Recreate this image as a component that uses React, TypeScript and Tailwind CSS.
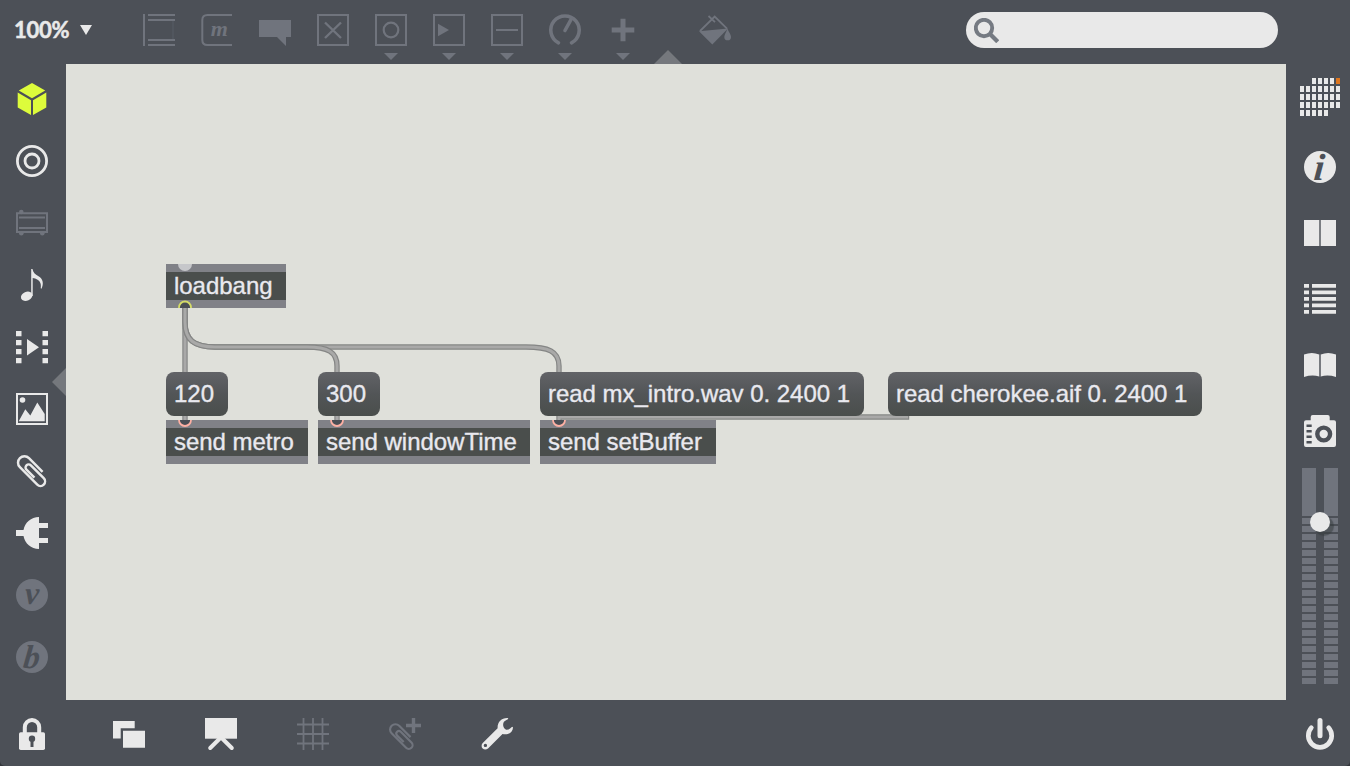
import React from "react";

type IconProps = { children: React.ReactNode; tone?: "light" | "muted" | "lime"; className?: string };

const tones = {
  light: "text-[#e9e9e9]",
  muted: "text-[#70747d]",
  lime: "text-[#ddfc3b]",
};

function Icon({ children, tone = "light", className = "" }: IconProps) {
  return (
    <svg viewBox="0 0 32 32" fill="currentColor" className={`block size-8 shrink-0 overflow-visible ${tones[tone]} ${className}`}>
      {children}
    </svg>
  );
}

function Line({ d, w = 2, cap = "butt" }: { d: string; w?: number; cap?: "butt" | "round" }) {
  return <path d={d} fill="none" stroke="currentColor" strokeWidth={w} strokeLinecap={cap} />;
}

function Glyph({ children, size, x, y, slant = 0, fill = "#4c5057" }: { children: string; size: number; x: number; y: number; slant?: number; fill?: string }) {
  return (
    <text
      transform={`translate(${x} ${y}) skewX(${-slant})`}
      fontSize={size}
      textAnchor="middle"
      fill={fill}
      className="font-['Liberation_Serif',serif] font-bold italic"
    >
      {children}
    </text>
  );
}

const clipPath = "M7.5-6.5H-10.5A6 6 0 0 0-10.5 5.5H12.5A4.25 4.25 0 0 0 12.5-3H-4.5A2.9 2.9 0 0 0-4.5 2.8H6";
const frame = "M1 1H31V31H1Z";

function Tool({ children, menu = false }: { children: React.ReactNode; menu?: boolean }) {
  return (
    <div className="flex flex-col items-center gap-[7px]">
      <Icon tone="muted">{children}</Icon>
      {menu && (
        <svg viewBox="0 0 14 7" className="block h-[7px] w-3.5">
          <path d="M0 0H14L7 7Z" fill="#70747d" />
        </svg>
      )}
    </div>
  );
}

function TopBar() {
  return (
    <header className="relative flex h-16 items-start">
      <div className="flex w-[143px] items-center gap-[11px] pt-[14px] pl-3.5">
        <span className="w-[55px] font-['Lato',sans-serif] text-[22px] leading-8 font-bold tracking-[-0.3px] whitespace-nowrap text-[#e9e9e9] [-webkit-text-stroke:0.5px_#e9e9e9]">100%</span>
        <svg viewBox="0 0 12 10" className="block h-2.5 w-3">
          <path d="M0 0H12L6 10Z" fill="#e9e9e9" />
        </svg>
      </div>
      <div className="flex gap-[26px] pt-3.5">
        <Tool>
          <path d="M0 0H2V32H0ZM5 0H32V2H5ZM5 5H32V7H5ZM5 25H32V27H5ZM5 30H32V32H5Z" />
          <path d="M29.5 7H30.5V25H29.5Z" opacity=".35" />
        </Tool>
        <Tool>
          <Line d="M31 1H6.5Q1.3 1 1.3 6V26Q1.3 31 6.5 31H31" />
          <Glyph size={22} x={18.3} y={21.7} fill="#70747d">m</Glyph>
        </Tool>
        <Tool>
          <path d="M0 6H32V23H27V32L18 23H0Z" />
        </Tool>
        <Tool>
          <Line d={frame} />
          <Line d="M8 8.5L24 24M24 8.5L8 24" w={2.4} />
        </Tool>
        <Tool menu>
          <Line d={frame} />
          <circle cx="16" cy="16" r="7.3" fill="none" stroke="currentColor" strokeWidth="2.2" />
        </Tool>
        <Tool menu>
          <Line d={frame} />
          <path d="M5 9.7L16 16L5 22.3Z" />
        </Tool>
        <Tool menu>
          <Line d={frame} />
          <Line d="M5 16H27" />
        </Tool>
        <Tool menu>
          <Line d="M9.5 28.8A14.2 14.2 0 1 1 22.5 28.8" w={3.6} cap="round" />
          <Line d="M16 16.5L22.3 5" w={3.6} cap="round" />
        </Tool>
        <Tool menu>
          <Line d="M4.7 16H27.3M16 4.8V27.3" w={5} />
        </Tool>
      </div>
      <div className="ml-[60px] pt-3.5">
        <Icon tone="muted">
          <path d="M0 17.3L29 14.5L13.3 30.5Z" />
          <Line d="M1 17L15.7 2.6L28 14.6M9.5 2L16 8.2" w={1.8} />
          <path d="M28.3 14.5C30 18.5 32 20.5 32 23A3.3 3.3 0 0 1 25.3 23C25.3 20.5 27.3 18.5 28.3 14.5Z" />
        </Icon>
      </div>
      <svg viewBox="0 0 28 14" className="absolute top-[50px] left-[654px] h-3.5 w-7">
        <path d="M0 14L14 0L28 14Z" fill="#75787d" />
      </svg>
      <label className="mt-3 mr-[72px] ml-auto flex h-9 w-[312px] items-center rounded-full bg-[#e9e9e9] pl-2">
        <svg viewBox="0 0 25 25" className="block size-[25px]" fill="none" stroke="#757a82">
          <circle cx="10" cy="10" r="8.2" strokeWidth="3.9" />
          <path d="M15.5 15.5L23.7 23.7" strokeWidth="4.2" />
        </svg>
      </label>
    </header>
  );
}

function LeftBar() {
  return (
    <nav className="relative flex w-[66px] flex-col gap-[30px] pt-[19px] pl-4">
      <Icon tone="lime">
        <path d="M16 0L29.2 7.6L16 15.2L2.8 7.6ZM1.7 9.5L15 17.2V32L1.7 24.4ZM30.3 9.5L17 17.2V32L30.3 24.4Z" />
      </Icon>
      <Icon>
        <g fill="none" stroke="currentColor" strokeWidth="2.8">
          <circle cx="16" cy="16" r="14.6" />
          <circle cx="16" cy="16" r="7" />
        </g>
      </Icon>
      <Icon tone="muted">
        <Line d="M1 6.3H31V25H1ZM3 10.5H29M3 21H29" />
        <circle cx="5.3" cy="5" r="2.3" />
        <circle cx="5.3" cy="26.3" r="2.3" />
        <circle cx="26.3" cy="26.3" r="2.3" />
      </Icon>
      <Icon>
        <path d="M15.2 0H16.5C17 3.5 19 5.2 22.5 7.2C27 9.9 28 14.5 25.5 19.7L24.7 19.3C25.6 14.5 24 10.3 16.7 9V27H15.2Z" />
        <ellipse cx="10.7" cy="27.2" rx="6" ry="4.4" transform="rotate(-24 10.7 27.2)" />
      </Icon>
      <Icon>
        {[0, 9, 18, 27].map((y) => (
          <path key={y} d={`M0 ${y}H5.5V${y + 5.2}H0ZM26.5 ${y}H32V${y + 5.2}H26.5Z`} />
        ))}
        <path d="M11 8L23 16.2L11 24.4Z" />
      </Icon>
      <Icon>
        <Line d={frame} />
        <circle cx="6.5" cy="7" r="2.8" />
        <path d="M2.7 28.3L9.3 16.3L14.3 22.5L21.3 9.5L28.7 21V28.3Z" />
      </Icon>
      <Icon>
        <g transform="translate(16 16) rotate(45) scale(1.07)">
          <Line d={clipPath} w={2.3} />
        </g>
      </Icon>
      <Icon>
        <path d="M0 13H7.5C9 5.5 15 0 23 0V6H32V11H23V21H32V26H23V32C15 32 9 26.5 7.5 19H0Z" />
      </Icon>
      <Icon tone="muted">
        <circle cx="16" cy="16" r="16" />
        <Glyph size={32} x={15.5} y={24.8} slant={3}>v</Glyph>
      </Icon>
      <Icon tone="muted">
        <circle cx="16" cy="16" r="16" />
        <Glyph size={33} x={14.8} y={26.7} slant={6}>b</Glyph>
      </Icon>
      <svg viewBox="0 0 14 28" className="absolute top-[304px] right-0 h-7 w-3.5">
        <path d="M14 0V28L0 14Z" fill="#75787d" />
      </svg>
    </nav>
  );
}

const logoRows = [
  [2, 3, 4, 5, 6],
  [0, 1, 2, 3, 4, 5, 6],
  [0, 1, 2, 3, 4, 5, 6],
  [0, 1, 2, 3, 4, 5, 6],
  [0, 1, 2, 3, 4],
];

function Meter() {
  return (
    <div className="flex w-3.5 flex-col gap-0.5">
      <div className="h-12 bg-[#70747d]" />
      {Array.from({ length: 21 }, (_, i) => (
        <div key={i} className="h-1.5 bg-[#70747d]" />
      ))}
    </div>
  );
}

function RightBar() {
  return (
    <nav className="flex w-16 flex-col items-center pt-3.5 pl-1">
      <svg viewBox="0 0 40 38" className="block h-[38px] w-10">
        {logoRows.map((cols, r) =>
          cols.map((c) => (
            <rect key={`${r}-${c}`} x={c * 6} y={r * 8} width="4" height="6" fill={r === 0 && c === 6 ? "#dd761f" : "#e9e9e9"} />
          )),
        )}
      </svg>
      <div className="mt-[35px] flex flex-col gap-[34px]">
        <Icon>
          <circle cx="16" cy="16" r="16" />
          <Glyph size={38} x={14.2} y={28.8} slant={5}>i</Glyph>
        </Icon>
        <Icon>
          <path d="M0 3H32V29H0Z" />
          <path d="M15 3H17V29H15Z" fill="#7b7e83" />
        </Icon>
        <Icon>
          {[1, 7.5, 14, 20.5, 27].map((y) => (
            <path key={y} d={`M0 ${y}H5V${y + 3.8}H0ZM8 ${y}H32V${y + 3.8}H8Z`} />
          ))}
        </Icon>
        <Icon>
          <path d="M0 5.5Q8 2.5 15.2 5.5V27.5Q8 25.5 0 28ZM32 5.5Q24 2.5 16.8 5.5V27.5Q24 25.5 32 28Z" />
          <path d="M15.2 5.5H16.8V27.5H15.2Z" fill="#7b7e83" />
        </Icon>
        <Icon>
          <path d="M2 5.3H6.7V2Q6.7 0 8.7 0H23.7Q25.7 0 25.7 2V5.3H30Q32 5.3 32 7.3V30Q32 32 30 32H2Q0 32 0 30V7.3Q0 5.3 2 5.3Z" />
          <path d="M2.5 9.5H7.7V12H2.5ZM2.5 15H7.7V17.5H2.5ZM2.5 20.5H7.7V23H2.5ZM2.5 26H7.7V28.5H2.5Z" fill="#4c5057" />
          <circle cx="19.7" cy="19" r="6.4" fill="none" stroke="#4c5057" strokeWidth="4.4" />
        </Icon>
      </div>
      <div className="relative mt-[21px] flex gap-2">
        <Meter />
        <Meter />
        <div className="absolute top-11 left-2 size-5 rounded-full bg-[#e9e9e9] shadow-[4px_4px_1px_rgba(50,55,57,0.5)]" />
      </div>
    </nav>
  );
}

const cables = [
  "M185 308V374",
  "M185 308V322C185 340 194 347 215 347H526C548 347 559 351 559 366V374",
  "M185 308V322C185 340 194 347 215 347H307C328 347 337 352 337 366V374",
  "M185 414V422",
  "M337 414V422",
  "M906.5 414V417H559V422",
];

type PatchBox = { label: string; place: string; inlet?: "plain" | "ring"; outlet?: boolean };

const objects: PatchBox[] = [
  { label: "loadbang", place: "left-[100px] top-[200px] w-[120px]", inlet: "plain", outlet: true },
  { label: "send metro", place: "left-[100px] top-[356px] w-[142px]", inlet: "ring" },
  { label: "send windowTime", place: "left-[252px] top-[356px] w-[212px]", inlet: "ring" },
  { label: "send setBuffer", place: "left-[474px] top-[356px] w-[176px]", inlet: "ring" },
];

const messages: PatchBox[] = [
  { label: "120", place: "left-[100px] top-[308px] w-[62px]" },
  { label: "300", place: "left-[252px] top-[308px] w-[62px]" },
  { label: "read mx_intro.wav 0. 2400 1", place: "left-[474px] top-[308px] w-[324px]" },
  { label: "read cherokee.aif 0. 2400 1", place: "left-[822px] top-[308px] w-[314px]" },
];

function ObjectBox({ label, place, inlet, outlet }: PatchBox) {
  return (
    <div className={`absolute h-11 border-y-8 border-[#808187] bg-[#4a4e4c] pl-2 text-2xl leading-7 whitespace-nowrap ${place}`}>
      {label}
      <svg viewBox="0 0 14 8" className="absolute -top-2 left-3 h-2 w-3.5">
        {inlet === "plain" && <circle cx="7" cy="0" r="7" fill="#c6c7ca" />}
        {inlet === "ring" && <circle cx="7" cy="0" r="6" fill="#4a4e55" stroke="#fdb0a4" strokeWidth="1.8" />}
      </svg>
      {outlet && (
        <svg viewBox="0 0 14 8" className="absolute -bottom-2 left-3 h-2 w-3.5">
          <circle cx="7" cy="7.5" r="6" fill="#4a4e55" stroke="#d5dc68" strokeWidth="1.8" />
        </svg>
      )}
    </div>
  );
}

function Patcher() {
  return (
    <main className="relative flex-1 overflow-hidden bg-[#dfe0da] font-['Liberation_Sans',Arial,sans-serif] tracking-[-0.03px] text-[#e9e9ef] [-webkit-text-stroke:0.35px_#e9e9ef]">
      <svg viewBox="66 64 1220 636" className="absolute inset-0 size-full" fill="none">
        {cables.map((d) => (
          <g key={d}>
            <path d={d} stroke="#858685" strokeWidth="5.4" />
            <path d={d} stroke="#a9a9a8" strokeWidth="3" />
          </g>
        ))}
      </svg>
      {objects.map((o) => (
        <ObjectBox key={o.label} {...o} />
      ))}
      {messages.map((m) => (
        <div
          key={m.label}
          className={`absolute h-11 rounded-lg bg-gradient-to-b from-[#626367] via-[#525557] to-[#4a4e4c] pl-2 text-2xl leading-[44px] whitespace-nowrap ${m.place}`}
        >
          {m.label}
        </div>
      ))}
    </main>
  );
}

function BottomBar() {
  return (
    <footer className="flex h-[66px] items-start gap-[60px] pt-[18px] pr-3.5 pl-4">
      <Icon className="mr-[5px]">
        <Line d="M8.8 15V9.2A7.2 7.2 0 0 1 23.2 9.2V15" w={4} />
        <rect x="3" y="14.3" width="26" height="17.7" rx="1.7" />
        <circle cx="16" cy="20.8" r="3.2" fill="#4c5057" />
        <path d="M14.5 21H17.5V29H14.5Z" fill="#4c5057" />
      </Icon>
      <Icon>
        <path d="M0 3H21.7V10.2H7.7V20.5H0ZM10 12.7H32V29.7H10Z" />
      </Icon>
      <Icon>
        <path d="M0 0H32V20.7H0Z" />
        <Line d="M15.8 19.5L5.2 30M16.2 19.5L26.8 30" w={4} cap="round" />
      </Icon>
      <Icon tone="muted">
        <Line d="M6.5 0V32M16 0V32M25.5 0V32M0 6.5H32M0 16H32M0 25.5H32" w={1.8} />
      </Icon>
      <Icon tone="muted">
        <g transform="translate(12.7 18.5) rotate(45) scale(.89)">
          <Line d={clipPath} w={2.4} />
        </g>
        <Line d="M17 7.5H32M24.5 0V15" w={3.4} />
      </Icon>
      <Icon>
        <path
          fillRule="evenodd"
          d="M26.7 0C20.5-.3 16.3 4 16.6 10.3L1.5 25.3C-1.5 29.5 3.5 33.5 7 30.5L21.5 16C27.5 17.3 32 14.3 32 9.3L31 8.8C29 11 27 12.3 24.7 11.6C21.7 9.5 21.7 6 22.8 4C24 2.2 26 1.9 27.4 1ZM4.4 25.7A1.7 1.7 0 1 0 4.4 29.1A1.7 1.7 0 1 0 4.4 25.7Z"
        />
      </Icon>
      <Icon className="ml-auto">
        <Line d="M7.3 9.8A11.7 11.7 0 1 0 24.7 9.8" w={4.7} cap="round" />
        <Line d="M16 2.5V17.7" w={5} cap="round" />
      </Icon>
    </footer>
  );
}

export default function App() {
  return (
    <div className="h-[766px] w-[1350px] overflow-hidden bg-[#33363b]">
      <div className="flex h-full flex-col rounded-b-[5px] bg-[#4c5057]">
        <TopBar />
        <div className="flex h-[636px]">
          <LeftBar />
          <Patcher />
          <RightBar />
        </div>
        <BottomBar />
      </div>
    </div>
  );
}
